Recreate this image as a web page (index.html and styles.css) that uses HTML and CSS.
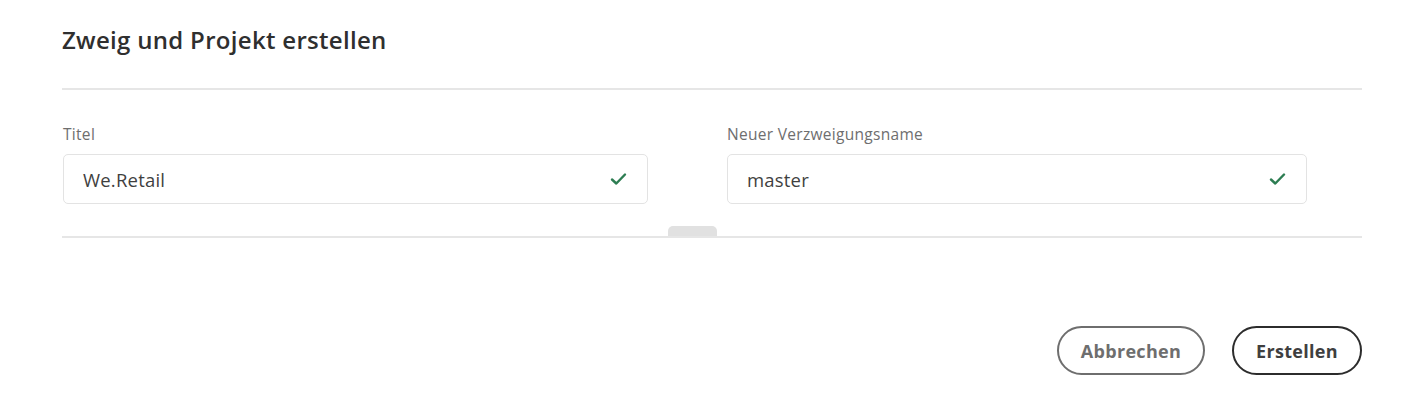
FILE: index.html
```html
<!DOCTYPE html>
<html lang="de">
<head>
<meta charset="utf-8">
<title>Zweig und Projekt erstellen</title>
<link rel="stylesheet" href="styles.css">
</head>
<body>
<div class="dialog">
  <h1 class="heading">Zweig und Projekt erstellen</h1>
  <hr class="divider">
  <div class="fields">
    <div class="field">
      <label class="label">Titel</label>
      <div class="input">
        <span class="value">We.Retail</span>
        <svg class="check" width="17" height="14" viewBox="0 0 17 14"><path d="M2 7.5 L6.3 11.5 L15 2.5" fill="none" stroke="#2d7d52" stroke-width="2.4" stroke-linecap="round" stroke-linejoin="round"/></svg>
      </div>
    </div>
    <div class="field">
      <label class="label">Neuer Verzweigungsname</label>
      <div class="input">
        <span class="value">master</span>
        <svg class="check" width="17" height="14" viewBox="0 0 17 14"><path d="M2 7.5 L6.3 11.5 L15 2.5" fill="none" stroke="#2d7d52" stroke-width="2.4" stroke-linecap="round" stroke-linejoin="round"/></svg>
      </div>
    </div>
  </div>
  <div class="split">
    <div class="handle"></div>
  </div>
  <div class="actions">
    <button class="btn btn-secondary">Abbrechen</button>
    <button class="btn btn-primary">Erstellen</button>
  </div>
</div>
</body>
</html>
```
FILE: styles.css
```css
* { box-sizing: border-box; }
body {
  margin: 0;
  background: #fff;
  font-family: "Open Sans", "Noto Sans", sans-serif;
  color: #2c2c2c;
}
.dialog {
  width: 1300px;
  margin-left: 62px;
  padding-top: 24px;
}
.heading {
  margin: 0;
  font-size: 24px;
  font-weight: 600;
  line-height: 32px;
  color: #2f2f2f;
  letter-spacing: 0.3px;
}
.divider {
  margin: 32px 0 0;
  border: 0;
  height: 2px;
  background: #e6e6e6;
}
.fields {
  display: flex;
  gap: 79px;
  padding-top: 34px;
}
.field {
  display: flex;
  flex-direction: column;
}
.field:first-child { width: 585px; margin-left: 1px; }
.field:last-child { width: 580px; }
.label {
  font-size: 15.5px;
  line-height: 20px;
  color: #6e6e6e;
  letter-spacing: 0.3px;
  margin-bottom: 10px;
}
.input {
  height: 50px;
  border: 1px solid #e3e3e3;
  border-radius: 5px;
  display: flex;
  align-items: center;
  justify-content: space-between;
  padding: 0 20px 0 19px;
}
.value {
  font-size: 18.5px;
  color: #3f3f3f;
  letter-spacing: 0.2px;
}
.check { display: block; }
.split {
  position: relative;
  margin-top: 32px;
  height: 2px;
  background: #e6e6e6;
}
.handle {
  position: absolute;
  left: 606px;
  top: -10px;
  width: 49px;
  height: 10px;
  background: #e1e1e1;
  border-radius: 5px 5px 0 0;
}
.actions {
  display: flex;
  justify-content: flex-end;
  gap: 27px;
  margin-top: 88px;
}
.btn {
  height: 49px;
  border-radius: 25px;
  border: 2px solid #6e6e6e;
  background: #fff;
  font-family: "Open Sans", "Noto Sans", sans-serif;
  font-size: 18px;
  font-weight: 700;
  padding: 0;
  letter-spacing: 0.3px;
}
.btn-secondary { color: #6e6e6e; width: 148px; }
.btn-primary { color: #3f3f3f; border-color: #2c2c2c; width: 130px; }
```
